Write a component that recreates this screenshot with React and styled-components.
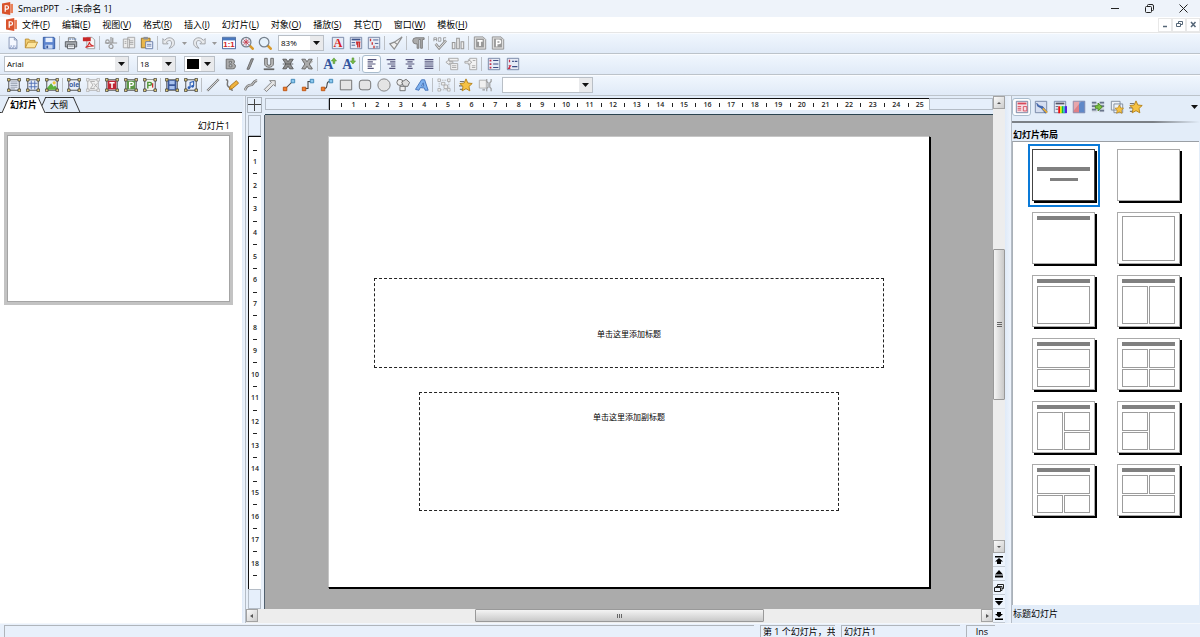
import React, { useState } from 'react'
import styled, { createGlobalStyle, css } from 'styled-components'

const GlobalStyle = createGlobalStyle`
    * {
        box-sizing: border-box;
    }
    html, body, #root {
        height: 100%;
    }
    body {
        margin: 0;
        overflow: hidden;
        font-family: "Open Sans", "Noto Sans CJK SC", sans-serif;
        font-size: 9px;
        line-height: 12px;
        color: #000;
    }
    button, select, input {
        font: inherit;
        color: inherit;
        padding: 0;
        margin: 0;
        border: none;
        background: none;
        border-radius: 0;
    }
    svg {
        display: block;
        flex: none;
    }
`

/* ---------- window frame ---------- */

const Window = styled.div`
    display: flex;
    flex-direction: column;
    height: 100vh;
    background: #e3edf9;
`
const TitleBar = styled.header`
    display: flex;
    align-items: center;
    height: 17px;
    flex: none;
    padding-left: 2px;
    background: #eef3fa;
`
const TitleText = styled.span`
    margin-left: 5px;
    flex: 1;
    white-space: pre;
`
const WindowButton = styled.button`
    width: 34px;
    height: 16px;
    display: flex;
    align-items: center;
    justify-content: center;
`
const MenuBar = styled.nav`
    display: flex;
    align-items: center;
    height: 16px;
    flex: none;
    padding-left: 6px;
    background: #fff;
    border-bottom: 1px solid #e6e6e6;
`
const MenuItems = styled.div`
    display: flex;
    flex: 1;
    gap: 12px;
    margin-left: 5px;
`
const MenuButton = styled.button`
    white-space: nowrap;
    line-height: 13px;
`
const DocButton = styled.button`
    width: 14px;
    height: 14px;
    display: flex;
    align-items: center;
    justify-content: center;
    border: 1px solid #e8e8e8;
`

/* ---------- toolbars ---------- */

const Toolbar = styled.div`
    display: flex;
    align-items: center;
    height: 21px;
    flex: none;
    padding-left: 4px;
    background: linear-gradient(#f1f7fe, #e0eaf7);
    border-bottom: 1px solid #bcc3ca;
    box-shadow: inset 0 1px 0 #fafcff;
`
const ToolButton = styled.button`
    width: ${(props) => props.$w || 19}px;
    height: 18px;
    flex: none;
    display: flex;
    align-items: center;
    justify-content: center;
    ${(props) => props.$active && css`
        background: #fdfeff;
        border: 1px solid #a9bccd;
        border-radius: 3px;
    `}
`
const Separator = styled.span`
    width: 1px;
    height: 14px;
    flex: none;
    margin: 0 ${(props) => (props.$tight ? 1 : 2)}px 0 1px;
    background: #bcc0c5;
`
const DropArrow = styled.button`
    width: 12px;
    height: 18px;
    display: flex;
    align-items: center;
    justify-content: center;
`
const Combo = styled.span`
    display: grid;
    width: ${(props) => props.$w}px;
    height: 16px;
    flex: none;
    margin: 0 ${(props) => props.$gap || 8}px 0 ${(props) => props.$before || 0}px;
    background: #fff;
    border: 1px solid #b9bfc6;
    select {
        grid-area: 1 / 1;
        appearance: none;
        width: 100%;
        padding-left: 2px;
        font-size: 8px;
        outline: none;
    }
`
const ComboArrow = styled.span`
    grid-area: 1 / 1;
    justify-self: end;
    width: 13px;
    display: flex;
    align-items: center;
    justify-content: center;
    background: #e9eaec;
    pointer-events: none;
`
const ColorButton = styled.button`
    display: flex;
    align-items: center;
    justify-content: space-between;
    width: 31px;
    height: 16px;
    padding: 0 3px 0 2px;
    margin-right: 6px;
    background: linear-gradient(90deg, #fff 16px, #e9eaec 16px);
    border: 1px solid #b9bfc6;
`
const Swatch = styled.span`
    width: 12px;
    height: 10px;
    background: #000;
`

/* ---------- slide list ---------- */

const Body = styled.main`
    display: flex;
    flex: 1;
    min-height: 0;
`
const LeftPanel = styled.aside`
    width: 242px;
    flex: none;
    display: flex;
    flex-direction: column;
    background: #fff;
`
const TabStrip = styled.div`
    display: flex;
    height: 17px;
    flex: none;
    padding: 1px 0 0 5px;
    background: #e3edf9;
    border-bottom: 1px solid #333;
`
const Tab = styled.button`
    position: relative;
    width: ${(props) => (props.$active ? 37 : 34)}px;
    height: 15px;
    z-index: ${(props) => (props.$active ? 2 : 1)};
    font-weight: ${(props) => (props.$active ? 700 : 400)};
    line-height: 15px;
    &::before, &::after {
        content: "";
        position: absolute;
        z-index: -1;
        top: 0;
        bottom: ${(props) => (props.$active ? -1 : 0)}px;
        border-top: 1px solid #333;
        background: ${(props) => (props.$active ? '#fff' : '#e3edf9')};
    }
    &::before {
        left: 0;
        right: 25%;
        border-left: 1px solid #333;
        transform: skewX(-24deg);
    }
    &::after {
        left: 25%;
        right: 0;
        border-right: 1px solid #333;
        transform: skewX(24deg);
    }
`
const SlideItem = styled.figure`
    margin: 6px 9px 0 4px;
`
const SlideLabel = styled.figcaption`
    padding-right: 3px;
    text-align: right;
    line-height: 13px;
`
const SlideThumb = styled.div`
    aspect-ratio: 229 / 173;
    border: 3px solid #c3c3c3;
    box-shadow: inset 0 0 0 1px #a4a4a4;
`

/* ---------- editor ---------- */

const Splitter = styled.div`
    width: ${(props) => props.$w}px;
    flex: none;
    background: linear-gradient(90deg, #dfeaf8, #eef4fc);
    border-right: 1px solid #b4bcc6;
`
const Editor = styled.section`
    flex: 1;
    min-width: 0;
    display: grid;
    grid-template: 19px 1fr 14px / 19px 1fr;
`
const Corner = styled.div`
    width: 15px;
    height: 16px;
    margin: 1px 0 0 1px;
    border: 1px solid #a9b1ba;
    background: #e6effa;
`
const RulerH = styled.div`
    display: flex;
    margin-top: 2px;
    height: 12px;
    padding: 0;
`
const RulerRow = styled.div`
    border-bottom: 1px solid #2b4450;
    background: #e3edf9;
`
const RulerCol = styled.div`
    display: flex;
    flex-direction: column;
    align-items: flex-start;
    padding-left: 2px;
    border-right: 1px solid #51606e;
    background: #e8f0fa;
`
const RulerBlank = styled.div`
    flex: 1;
    min-height: 0;
    align-self: stretch;
    margin-right: ${(props) => (props.$vertical ? 3 : 0)}px;
    border: 1px solid #b4bcc6;
    background: #e6effb;
`
const Scale = styled.div`
    display: flex;
    flex: none;
    background: #fff;
    font-size: 7px;
    line-height: 10px;
    font-weight: 600;
    color: #222;
    border-top: 1px solid #111;
    border-left: 1px solid #111;
    ${(props) => props.$vertical
        ? css`
            flex-direction: column;
            width: 13px;
            height: 453px;
            padding-top: 2px;`
        : css`
            width: 600px;`}
`
const Pad = styled.span`
    flex: ${(props) => props.$n} 1 0;
`
const Mark = styled.span`
    flex: 10 1 0;
    min-width: 0;
    min-height: 0;
    display: flex;
    align-items: center;
    justify-content: center;
`
const Tick = styled.i`
    flex: none;
    width: ${(props) => (props.$vertical ? 4 : 1)}px;
    height: ${(props) => (props.$vertical ? 1 : 4)}px;
    background: #222;
`
const Canvas = styled.div`
    display: flex;
    align-items: center;
    justify-content: center;
    overflow: hidden;
    background: #ababab;
`
const Slide = styled.article`
    width: 602px;
    height: 452px;
    flex: none;
    display: flex;
    flex-direction: column;
    align-items: center;
    gap: 24px;
    padding-top: 141px;
    background: #fff;
    border: 1px solid #c6c6c6;
    border-right-color: #000;
    border-bottom-color: #000;
    box-shadow: 1px 1px 0 #000;
    font-size: 8px;
`
const Placeholder = styled.div`
    width: ${(props) => props.$w}px;
    height: ${(props) => props.$h}px;
    padding-top: ${(props) => props.$top}px;
    border: 1px dashed #222;
    text-align: center;
`
const ScrollV = styled.div`
    width: 12px;
    flex: none;
    display: flex;
    flex-direction: column;
    background: #ededed;
`
const ScrollH = styled.div`
    grid-column: 1 / -1;
    display: flex;
    padding: 0 0 1px 0;
    background: #ededed;
`
const Track = styled.div`
    flex: 1;
    display: flex;
    flex-direction: ${(props) => (props.$vertical ? 'column' : 'row')};
    justify-content: center;
`
const Thumb = styled.div`
    flex: 0 0 ${(props) => (props.$vertical ? 35 : 40)}%;
    display: flex;
    align-items: center;
    justify-content: center;
    border: 1px solid #999;
    border-radius: 1px;
    background: linear-gradient(${(props) => (props.$vertical ? '90deg' : '180deg')}, #f4f4f4, #c9c9c9);
`
const ScrollButton = styled.button`
    width: 12px;
    height: 13px;
    flex: none;
    display: flex;
    align-items: center;
    justify-content: center;
    border: 1px solid #a3a3a3;
    background: linear-gradient(135deg, #fafafa, #ccc);
`
const NavButton = styled.button`
    width: 12px;
    height: 14px;
    flex: none;
    display: flex;
    align-items: center;
    justify-content: center;
    border-bottom: 1px solid #c2cad3;
    background: #edf4fd;
`

/* ---------- task pane ---------- */

const RightPanel = styled.aside`
    width: 188px;
    flex: none;
    display: flex;
    flex-direction: column;
    background: #e3edf9;
`
const PaneTools = styled.div`
    display: flex;
    align-items: center;
    height: 21px;
    flex: none;
`
const PaneMenu = styled.button`
    margin-left: auto;
    padding: 4px 2px;
`
const PaneRule = styled.hr`
    height: 2px;
    flex: none;
    width: 100%;
    margin: 4px 0 6px;
    border: none;
    background: linear-gradient(90deg, #7b8086 75%, #e3edf9);
`
const PaneTitle = styled.h2`
    margin: 0;
    padding-left: 1px;
    font-size: 9px;
    line-height: 12px;
    font-weight: 700;
`
const LayoutList = styled.div`
    flex: 1;
    min-height: 0;
    margin-right: 1px;
    display: grid;
    grid-template-columns: 85px 85px;
    grid-auto-rows: 63px;
    align-content: start;
    padding: 2px 0 0 15px;
    background: #fff;
    border-left: 1px solid #aab1b8;
    border-top: 1px solid #9a9fa5;
`
const LayoutCell = styled.button`
    width: 72px;
    height: 63px;
    padding: 3px 0 0 2px;
    border: 2px solid ${(props) => (props.$active ? '#0a7ad8' : 'transparent')};
    display: flex;
    align-items: flex-start;
`
const MiniSlide = styled.span`
    width: 63px;
    height: 52px;
    display: flex;
    flex-direction: column;
    align-items: center;
    gap: 3px;
    padding: ${(props) => (props.$cover ? 17 : 3)}px 4px 2px;
    background: #fff;
    border: 1px solid ${(props) => (props.$cover ? '#444' : '#aaa')};
    box-shadow: 2px 2px 0 #000;
`
const MiniBar = styled.span`
    width: ${(props) => (props.$short ? 28 : 53)}px;
    height: ${(props) => (props.$short ? 3 : 4)}px;
    margin-top: ${(props) => (props.$short ? 4 : 0)}px;
    background: #808080;
`
const MiniGrid = styled.span`
    align-self: stretch;
    flex: 1;
    display: grid;
    grid-template: 1fr 1fr / 1fr 1fr;
    gap: 1px;
`
const MiniBox = styled.span`
    grid-area: ${(props) => props.$area};
    border: 1px solid #9c9c9c;
`
const PaneFooter = styled.footer`
    height: 18px;
    flex: none;
    padding-left: 1px;
    line-height: 18px;
`

/* ---------- status bar ---------- */

const StatusBar = styled.footer`
    display: flex;
    gap: 6px;
    height: 14px;
    flex: none;
    padding: 1px 205px 0 4px;
    border-top: 1px solid #f3f7fc;
    background: #e8f0fb;
`
const StatusField = styled.span`
    flex: ${(props) => (props.$w ? `0 0 ${props.$w}px` : 1)};
    padding-left: 2px;
    overflow: hidden;
    white-space: nowrap;
    line-height: 11px;
    text-align: ${(props) => (props.$center ? 'center' : 'left')};
    border-top: 1px solid #b0b5bb;
    border-left: 1px solid #b0b5bb;
`

/* ---------- icons ---------- */

const Svg = ({ children, size = 14 }) => (
    <svg width={size} height={size} viewBox="0 0 16 16" fill="none" aria-hidden="true">{children}</svg>
)

const Arrow = () => (
    <svg width="7" height="4" viewBox="0 0 7 4" aria-hidden="true"><path d="M0 0h7L3.5 4z" fill="#111" /></svg>
)

const Glyph = ({ children, fill = '#fff', size = 10, y = 12, x = 8, ...rest }) => (
    <text x={x} y={y} fontSize={size} fontWeight="700" textAnchor="middle" fill={fill} fontFamily="Liberation Serif, serif" {...rest}>{children}</text>
)

/* object frame with four handles */
const Frame = ({ children, off }) => (
    <>
        <path d="M2 2h12v12H2z" fill={off ? '#f1f1f1' : '#e8eef8'} stroke={off ? '#aaa' : '#444'} />
        {children}
        <path d="M.5.5h3v3h-3zM12.500.5h3v3h-3zM.5 12.500h3v3h-3zM12.500 12.500h3v3h-3z" fill={off ? '#eee' : '#e6cf78'} stroke={off ? '#aaa' : '#333'} strokeWidth=".8" />
    </>
)
const Star = ({ t }) => (
    <path transform={t} d="M8 1l2.100 4.700 5 .6-3.700 3.400 1 5L8 12.200l-4.400 2.500 1-5L.9 6.300l5-.6z" fill="#f6c243" stroke="#b07d14" />
)
const Box = ({ fill = '#e6ebf6', stroke = '#7080a0' }) => <path d="M1.500 1.500h13v13h-13z" fill={fill} stroke={stroke} />
const Lens = ({ children }) => (
    <>
        <path d="M10.500 10.500l4 4" stroke="#d99a2b" strokeWidth="3" strokeLinecap="round" />
        <circle cx="7" cy="7" r="5.500" fill="#e5f1fb" stroke="#76808c" strokeWidth="1.400" />
        {children}
    </>
)
const Connector = ({ d }) => (
    <>
        <path d={d} stroke="#444" strokeWidth="1.200" />
        <path d="M1.500 10.500h4v4h-4z" fill="#f08030" stroke="#b9500d" />
        <path d="M10.500 1.500h4v4h-4z" fill="#8cc8ee" stroke="#3a83b5" />
    </>
)
const Lines = ({ d, c = '#55557c' }) => <path d={d} stroke={c} strokeWidth="1.400" />

const icons = {
    new: <><path d="M3.500 1.500h6l3 3v10h-9z" fill="#f4f8ff" stroke="#7f8fb0" /><path d="M9.500 1.500v3h3" stroke="#7f8fb0" /><path d="M4 13.500h9M5 11.500h7" stroke="#6d83b8" strokeDasharray="2 1" /></>,
    open: <><path d="M1.500 13.500v-10h4l1 1.500h6v3" fill="#f2cf74" stroke="#b98a2d" /><path d="M1.500 13.500l3-6.500h11l-3 6.500z" fill="#fde59c" stroke="#b98a2d" /></>,
    save: <><path d="M1.500 1.500h12l1 1v12h-13z" fill="#5d85cf" stroke="#2e549c" /><path d="M4 2h8v5H4z" fill="#e9f0fc" /><path d="M4 10h8v4.500H4z" fill="#c9d8f2" /><path d="M5 11h2v3H5z" fill="#39589a" /></>,
    print: <><path d="M5 6V2h7l1 4" fill="#f8fafc" stroke="#777" /><path d="M6 3.500h9" stroke="#3d67a8" strokeDasharray="2 1" /><path d="M1.500 6.500h13v6h-13z" fill="#a9adb2" stroke="#53575c" /><path d="M4 9.500h8v5H4z" fill="#eef2f8" stroke="#53575c" /><path d="M5 11.500h6" stroke="#777" /></>,
    pdf: <><path d="M5.500 1.500h6l3 3v10h-9z" fill="#f7f7f7" stroke="#999" /><path d="M1 1.500h9v4.500H1z" fill="#c92828" /><path d="M4 13c2-1 4-3 4.500-6 .5 3 2 4 5 4.500-3 0-6 .5-9.500 1.500z" stroke="#d23232" strokeWidth="1.200" /></>,
    cut: <><path d="M1 8h14M8 1v8M10 2v6" stroke="#999" strokeWidth="1.400" /><circle cx="4" cy="6.500" r="2" stroke="#999" strokeWidth="1.300" /><circle cx="8" cy="12" r="2.300" stroke="#999" strokeWidth="1.300" /></>,
    copy: <><path d="M1.500 3.500h7v10h-7zM6.500 1.500h8v12h-8z" fill="#ececec" stroke="#a3a3a3" /><path d="M3 6.500h2m-2 2h2m3-3h5m-5 2h5m-5 2h5" stroke="#a3a3a3" /></>,
    paste: <><path d="M1.500 2.500h10v11h-10z" fill="#e9b64b" stroke="#8a6b2b" /><path d="M4 1h5v3H4z" fill="#8d9199" /><path d="M6.500 6.500h8v8h-8z" fill="#f1f5fd" stroke="#6177a5" /><path d="M8 9.500h5m-5 2h5" stroke="#6177a5" /></>,
    undo: <path d="M1 3v6h6L5 7c3-3 6-2 6 1 0 2-1 4-3 6 5-1 7-4 6-8C13 2 7 0 3 5z" fill="#e9ebee" stroke="#999ca0" />,
    redo: <path d="M15 3v6H9l2-2C8 4 5 5 5 8c0 2 1 4 3 6-5-1-7-4-6-8C3 2 9 0 13 5z" fill="#e9ebee" stroke="#999ca0" />,
    actual: <><path d="M.5 1.500h15v13H.5z" fill="#fff" stroke="#34568f" /><path d="M1 2h14v3H1z" fill="#4a78bf" /><Glyph size={9} y={13} fill="#d01f1f" fontFamily="Liberation Sans, sans-serif">1:1</Glyph></>,
    zoomPage: <Lens><path d="M7 3v8M3 7h8M4 4l6 6M10 4l-6 6" stroke="#c63d4c" /></Lens>,
    zoom: <Lens />,
    fontA: <><Box /><Glyph size={14} y={13} fill="#d81e1e">A</Glyph></>,
    para: <><Box /><path d="M3 4h10" stroke="#3e558c" strokeWidth="2" /><path d="M3 7.500h4m-4 3h4" stroke="#3e558c" /><path d="M8 7h5M10 7v6m2-6v6M9 7v3" stroke="#cc2e2e" strokeWidth="1.500" /></>,
    list: <><Box /><path d="M4 3v3m2 1v3m2 1v3" stroke="#cc2e2e" strokeWidth="1.500" /><path d="M7 4.500h6M9 8.500h4m-3 4h3" stroke="#3e558c" /></>,
    brush: <path d="M15 1l-5 8-4 6-5-6 5-2zM6 7l4 3" fill="#f0f0f0" stroke="#8e8e8e" strokeWidth="1.300" />,
    pilcrow: <path d="M15 2H5.500a3.500 3.500 0 000 7H7v5h2V4h2v10h2V4h2z" fill="#ababab" stroke="#777" />,
    spell: <><path d="M1 6V2h3v4M1 4h3M6 6V2h3v4H6m6-4h3M12 2v4h3" stroke="#999" /><path d="M3 9l4 5 8-9" stroke="#8e8e8e" strokeWidth="3" /><path d="M3 9l4 5 8-9" stroke="#eee" /></>,
    chart: <path d="M1.500 7.500h3v7h-3zM6.500 2.500h3v12h-3zM11.500 6.500h3v8h-3z" fill="#ececec" stroke="#999" strokeWidth="1.200" />,
    pageT: <><path d="M1.500 1h10l3 3v11h-13z" fill="#ddd" stroke="#8e8e8e" /><path d="M3.500 3h9v10h-9z" fill="#999" /><path d="M5 5.500h6M8 5v6.500" stroke="#fff" strokeWidth="2" /></>,
    pageP: <><path d="M1.500 1h10l3 3v11h-13z" fill="#ddd" stroke="#8e8e8e" /><path d="M3.500 3h9v10h-9z" fill="#999" /><path d="M6.500 12V5h2.500a1.800 1.800 0 010 3.600H7" stroke="#fff" strokeWidth="1.800" /></>,

    bold: <path fillRule="evenodd" d="M2.500 2.500H9a3 3 0 012 5.200A3 3 0 019.500 13.500h-7zM6 5v2h2.500V5zM6 9v2.200h3V9z" fill="#aaa" stroke="#666" />,
    italic: <path d="M9.500 2h2.500l-5 12H4.500z" fill="#999" stroke="#666" />,
    under: <><path d="M3 1.500h3V8c0 2 4 2 4 0V1.500h3V8c0 5-10 5-10 0z" fill="#bbb" stroke="#666" /><path d="M2 14h12" stroke="#666" strokeWidth="2" /></>,
    strike: <><path d="M2 2.500h4l2 3 2-3h4L10.500 8l3.500 5.500h-4l-2-3-2 3H2L5.500 8z" fill="#8f8f8f" stroke="#555" /><path d="M2 8h12" stroke="#555" /></>,
    shadow: <><path d="M4 4l10 10M14 4L4 14" stroke="#c3c3c3" strokeWidth="3" /><path d="M2 2.500h4l2 3 2-3h4L10.500 8l3.500 5.500h-4l-2-3-2 3H2L5.500 8z" fill="#aaa" stroke="#666" /></>,
    grow: <><Glyph size={16} x={6} y={14} fill="#33569f">A</Glyph><path d="M12.500 1l3 3.500h-2v3h-2v-3h-2z" fill="#76bb45" stroke="#4d8a26" strokeWidth=".6" /></>,
    shrink: <><Glyph size={16} x={6} y={14} fill="#33569f">A</Glyph><path d="M12.500 8l3-3.500h-2V1h-2v3.500h-2z" fill="#76bb45" stroke="#4d8a26" strokeWidth=".6" /></>,
    left: <Lines d="M3 3h10M3 5.500h6M3 8h9M3 10.500h5M3 13h7" />,
    right: <Lines d="M3 3h10M7 5.500h6M4 8h9M8 10.500h5M6 13h7" />,
    center: <Lines d="M3 3h10M5 5.500h6M3 8h10M6 10.500h4M5 13h6" />,
    justify: <Lines d="M3 3h10M3 5.500h10M3 8h10M3 10.500h10M3 13h10" />,
    outdent: <><path d="M4 1.500h11v3H4zM6.500 7.500h8v7h-8z" fill="#f2f2f2" stroke="#a3a3a3" /><path d="M1 6l4-3v2h4v2H5v2zM8 10h5m-5 2h5" fill="#eee" stroke="#a3a3a3" /></>,
    indent: <><path d="M6.500 1.500h8v13h-8z" fill="#f2f2f2" stroke="#a3a3a3" /><path d="M9 6L5 3v2H1v2h4v2zM9 10h4m-4 2h4m-3-8h3" fill="#eee" stroke="#a3a3a3" /></>,
    bullets: <><Box /><path d="M3 4h2M3 8h2m-2 4h2" stroke="#c62f4a" strokeWidth="2" /><path d="M7 4h6M7 8h6m-6 4h6" stroke="#3e4d84" strokeWidth="1.400" /></>,
    numbers: <><Box /><path d="M4 3v3M3 10h2l-2 3h2" stroke="#c62f4a" strokeWidth="1.400" /><path d="M7 5h2m1 0h3M7 11h6" stroke="#3e4d84" strokeWidth="1.400" /></>,

    oText: <Frame><path d="M4 4.500h8M4 6.500h8m-8 2h8m-8 2h8m-8 2h5" stroke="#8d96a6" /></Frame>,
    oTable: <Frame><path d="M3 6h10M3 10h10M6 3v10M10 3v10" stroke="#4c6cb4" /></Frame>,
    oImage: <Frame><path d="M2.500 13.500V11L7 6l3 4 1.500-1.500 2 2.500v2.500z" fill="#5db23c" /><circle cx="10.500" cy="5.500" r="1.800" fill="#f2c53b" /></Frame>,
    oOle: <Frame><Glyph size={8} y={10.500} fill="#35569c" fontFamily="Liberation Sans, sans-serif">ole</Glyph></Frame>,
    oFormula: <Frame off><path d="M10 4H5l3 4-3 4h5M9 6l4 5m0-5l-4 5" stroke="#aaa" /></Frame>,
    oTitle: <Frame><path d="M3 3h10v10H3z" fill="#c02734" /><path d="M5 5.500h6M8 5v6.500" stroke="#fff" strokeWidth="1.800" /></Frame>,
    oP: <Frame><path d="M3 3h10v10H3z" fill="#5d9748" /><path d="M6.500 12V5H9a1.700 1.700 0 010 3.400H7" stroke="#fff" strokeWidth="1.600" /></Frame>,
    oPage: <Frame><path d="M4 2h8v12H4z" fill="#f0f5ec" /><path d="M5.500 12V5H8a1.700 1.700 0 010 3.400H6" stroke="#4f963a" strokeWidth="1.600" /><path d="M11 6v5" stroke="#c33" strokeWidth="1.500" /></Frame>,
    oMovie: <Frame><path d="M3 2.500h10v11H3z" fill="#3c5a9c" /><path d="M5 3.500h6V7H5zM5 9h6v3.500H5z" fill="#a9c2ef" /></Frame>,
    oMusic: <Frame><path d="M7 11V5l4-1v5" stroke="#2f60b4" strokeWidth="1.300" /><circle cx="5.700" cy="11" r="1.600" fill="#2f60b4" /><circle cx="9.800" cy="9.500" r="1.600" fill="#2f60b4" /></Frame>,
    line: <><path d="M1.500 14.500l13-13" stroke="#777" strokeWidth="2.600" /><path d="M1.500 14.500l13-13" stroke="#e3e3e3" /></>,
    pen: <><path d="M1 2c5 0-1 6 3 8s1 4 5 4" stroke="#777" strokeWidth="1.600" /><path d="M5 13l1-4 7-6 2.500 3-7 6z" fill="#f0b33c" stroke="#a66c14" /></>,
    curve: <><path d="M1 14c2-5 4-6 7-6s2-5 7-5" stroke="#777" strokeWidth="3" /><path d="M1 14c2-5 4-6 7-6s2-5 7-5" stroke="#e6e6e6" /></>,
    arrow: <path d="M1.500 13l8-8-2-2H14v6.500l-2-2-8 8z" fill="#e6e6e6" stroke="#777" />,
    c1: <Connector d="M4 12l8-8" />,
    c2: <Connector d="M4 12h4V4h4" />,
    c3: <Connector d="M4 12c7 1 1-9 8-8" />,
    rect: <path d="M1.500 2.500h13v11h-13z" fill="#e4e4e4" stroke="#666" />,
    round: <rect x="1.500" y="2.500" width="13" height="11" rx="3" fill="#e4e4e4" stroke="#666" />,
    ellipse: <circle cx="8" cy="8" r="7" fill="#e4e4e4" stroke="#777" />,
    shapes: <><circle cx="4.500" cy="5" r="3.500" fill="#eee" stroke="#666" /><path d="M6.500 4.500l5-3 4 3.500-2 4.500h-5z" fill="#ddd" stroke="#666" /><path d="M4.500 9.500h6v5h-6z" fill="#eee" stroke="#666" /></>,
    art: <path fillRule="evenodd" d="M.5 13L7.500 2H11l4 12h-3.500l-.7-2.500L6 11l-1.500 3zM7.500 9l2.500.3L9.400 5.500z" fill="#7fb2ef" stroke="#3465b0" strokeWidth=".9" />,
    group: <><path d="M2.500 2.500h11v11h-11z" stroke="#b3b3b3" strokeDasharray="2 1" /><path d="M1 1h3v3H1zM12 1h3v3h-3zM1 12h3v3H1zM12 12h3v3h-3z" fill="#eee" stroke="#999" strokeWidth=".7" /><path d="M5 5h4v3H5zM8 8h4v4H8z" fill="#eee" stroke="#aaa" /></>,
    star: <><path d="M1 4h5M0 9h5M1 13h5" stroke="#777" strokeWidth="1.400" /><Star /></>,
    action: <><path d="M1.500 2.500h8v9h-8z" fill="#f0f0f0" stroke="#aaa" /><path d="M10 1v3l1.500 1.500v5L10 12v3M15 1v3l-1.500 1.500v5L15 12v3M5 13.500h3" stroke="#999" strokeWidth="1.300" /></>,

    pLayout: <><Box fill="#f6dfe3" /><path d="M3 4h10" stroke="#d7485b" strokeWidth="2" /><path d="M3 7.500h4m-4 2h4m-4 2h4M9.500 7.500h4v5h-4z" stroke="#d7485b" /></>,
    pDesign: <><Box fill="#d5def0" /><path d="M3 3.500l3 3 4 1 5 6-2 1.500-5-6-4-2z" fill="#3f6ab8" stroke="#2d4f90" strokeWidth=".6" /><path d="M10 9.500l5 5" stroke="#e5ac3c" strokeWidth="2.200" /></>,
    pColor: <><Box /><path d="M3 4h10" stroke="#556" strokeWidth="2" /><path d="M3 7.500h3m-3 3h3" stroke="#556" /><path d="M6 7h2v8H6z" fill="#e11" /><path d="M8 7h2v8H8z" fill="#ee0" /><path d="M10 7h2v8h-2z" fill="#1b3" /><path d="M12 7h1.500v8H12z" fill="#1bd" /><path d="M13.500 7H16v8h-2.500z" fill="#52d" /></>,
    pBack: <><path d="M1 1h7v14H1z" fill="#df8087" /><path d="M8 1h7v14H8z" fill="#5f88c8" /><path d="M1 1h10L1 13z" fill="#fff" opacity=".3" /><path d="M1.500 1.500h13v13h-13z" stroke="#8b93b5" /></>,
    pSwitch: <><path d="M1 2h6v12H1zM9 2h6v12H9z" fill="#d3d9e4" /><path d="M1 3h5M1 7h4m-4 4h5m4-8h5m-4 4h4m-5 5h5" stroke="#68758c" strokeWidth="2" /><path d="M5 6.500h3V3.500L13 8l-5 4.500v-3H5z" fill="#7cc13f" stroke="#4a8521" /></>,
    pCopy: <><path d="M1.500 1.500h10v10h-10zM4.500 4.500h10v10h-10z" fill="#eef2f8" stroke="#7b8798" /><Star t="translate(5 5) scale(.7)" /></>,
}

const Tool = ({ name, w, active }) => (
    <ToolButton type="button" aria-label={name} $w={w} $active={active}><Svg>{icons[name]}</Svg></ToolButton>
)

/* '|' draws a separator, 'v' a small drop arrow */
const Tools = ({ items, w, tight, active }) => items.split(' ').map((name, i) => {
    if (name === '|') return <Separator key={i} $tight={tight} />
    if (name === 'v') return <DropArrow key={i} type="button" aria-label="more"><svg width="5" height="3" viewBox="0 0 5 3"><path d="M0 0h5L2.500 3z" fill="#999" /></svg></DropArrow>
    return <Tool key={i} name={name} w={w} active={name === active} />
})

const Select = ({ label, options, w, gap, before }) => (
    <Combo $w={w} $gap={gap} $before={before}>
        <select aria-label={label}>
            {options.map((o) => <option key={o}>{o}</option>)}
        </select>
        <ComboArrow><Arrow /></ComboArrow>
    </Combo>
)

const Logo = ({ size }) => (
    <svg width={size} height="13" viewBox="0 0 12 14" aria-hidden="true">
        <path d="M0 1.500L9 0v14l-9-1.500z" fill="#d9532c" />
        <path d="M9 2h3v10H9z" fill="#e9825c" />
        <path d="M3.500 10.500V4h1.800a1.800 1.800 0 010 3.600H4" stroke="#fff" strokeWidth="1.300" fill="none" />
    </svg>
)

const menus = [['文件', 'F'], ['编辑', 'E'], ['视图', 'V'], ['格式', 'R'], ['插入', 'I'], ['幻灯片', 'L'], ['对象', 'O'], ['播放', 'S'], ['其它', 'T'], ['窗口', 'W'], ['模板', 'H']]

const FULL = '1 / 1 / 3 / 3'
const [TL, TR, BL, BR] = ['1 / 1', '1 / 2', '2 / 1', '2 / 2']
const TOP = '1 / 1 / 2 / 3'
const BOTTOM = '2 / 1 / 3 / 3'
const LEFT = '1 / 1 / 3 / 2'
const RIGHT = '1 / 2 / 3 / 3'

const layouts = [
    { name: '标题幻灯片', cover: true },
    { name: '空白' },
    { name: '仅标题', title: true },
    { name: '内容', boxes: [FULL] },
    { name: '标题和内容', title: true, boxes: [FULL] },
    { name: '两栏', title: true, boxes: [LEFT, RIGHT] },
    { name: '上下', title: true, boxes: [TOP, BOTTOM] },
    { name: '四项', title: true, boxes: [TL, TR, BL, BR] },
    { name: '左一右二', title: true, boxes: [LEFT, TR, BR] },
    { name: '左二右一', title: true, boxes: [TL, BL, RIGHT] },
    { name: '上一下二', title: true, boxes: [TOP, BL, BR] },
    { name: '上二下一', title: true, boxes: [TL, TR, BOTTOM] },
]

const Ruler = ({ count, end, vertical }) => (
    <Scale $vertical={vertical}>
        <Pad $n={5} />
        {Array.from({ length: count }, (_, i) => (
            <Mark key={i}>{i % 2 ? (i + 1) / 2 : <Tick $vertical={vertical} />}</Mark>
        ))}
        <Pad $n={end} />
    </Scale>
)

const Triangle = ({ d }) => (
    <svg width="6" height="6" viewBox="0 0 6 6" aria-hidden="true"><path d={d} fill="#555" /></svg>
)
const navs = [
    ['first', 'M1 1h8v1.500H1zM5 3l4 3.500H1zM3 6h4v3H3z'],
    ['previous', 'M5 1l4 4.500H1zM1 6.500h8v2H1z'],
    ['browse', null],
    ['next', 'M1 1h8v2H1zM1 4h8L5 8.500z'],
    ['last', 'M3 1h4v2H3zM1 3h8L5 6.500zM1 7.500h8V9H1z'],
]

const App = () => {
    const [layout, setLayout] = useState(0)
    return (
        <Window>
            <GlobalStyle />
            <TitleBar>
                <Logo size={11} />
                <TitleText>{'SmartPPT   - [未命名 1]'}</TitleText>
                <WindowButton aria-label="Minimize"><svg width="9" height="9" viewBox="0 0 9 9"><path d="M0 4.500h8" stroke="#222" /></svg></WindowButton>
                <WindowButton aria-label="Restore"><svg width="9" height="9" viewBox="0 0 9 9" fill="none" stroke="#222"><path d="M2.500 2V1.500q0-1 1-1H7q1.500 0 1.500 1.500v3.500q0 1-1 1H7" /><rect x=".5" y="2.500" width="6" height="6" rx="1" /></svg></WindowButton>
                <WindowButton aria-label="Close"><svg width="9" height="9" viewBox="0 0 9 9"><path d="M.5.5l8 8M8.500.5l-8 8" stroke="#222" /></svg></WindowButton>
            </TitleBar>
            <MenuBar>
                <Logo size={11} />
                <MenuItems>
                    {menus.map(([text, key]) => (
                        <MenuButton key={key} type="button">{text}(<u>{key}</u>)</MenuButton>
                    ))}
                </MenuItems>
                <DocButton aria-label="Minimize document"><svg width="7" height="7" viewBox="0 0 7 7"><path d="M1 5.500h4" stroke="#556677" strokeWidth="1.500" /></svg></DocButton>
                <DocButton aria-label="Restore document"><svg width="7" height="7" viewBox="0 0 7 7" fill="none" stroke="#556677"><path d="M2.500 2V.5h4v3H5M.5 2.500h4v3h-4z" /></svg></DocButton>
                <DocButton aria-label="Close document"><svg width="7" height="7" viewBox="0 0 7 7"><path d="M1 1l4.500 5M5.500 1L1 6" stroke="#556677" strokeWidth="1.500" /></svg></DocButton>
            </MenuBar>
            <Toolbar>
                <Tools w={18} items="new open save | print pdf | cut copy paste | undo v redo v actual zoomPage zoom" />
                <Select label="Zoom" options={['83%', '100%']} w={46} gap={5} before={4} />
                <Tools w={18} items="fontA para list | brush | pilcrow | spell chart | pageT pageP" />
            </Toolbar>
            <Toolbar>
                <Select label="Font" options={['Arial']} w={125} />
                <Select label="Size" options={['18', '24']} w={39} />
                <ColorButton type="button" aria-label="Font colour"><Swatch /><Arrow /></ColorButton>
                <Tools active="left" items="bold italic under strike shadow | grow shrink | left right center justify | outdent indent | bullets numbers" />
            </Toolbar>
            <Toolbar>
                <Tools tight items="oText oTable oImage | oOle oFormula oTitle oP oPage | oMovie oMusic | line pen curve arrow c1 c2 c3 rect round ellipse shapes art | group | star action" />
                <Select label="Action" options={['']} w={91} before={8} />
            </Toolbar>
            <Body>
                <LeftPanel>
                    <TabStrip>
                        <Tab type="button" $active>幻灯片</Tab>
                        <Tab type="button">大纲</Tab>
                    </TabStrip>
                    <SlideItem>
                        <SlideLabel>幻灯片1</SlideLabel>
                        <SlideThumb />
                    </SlideItem>
                </LeftPanel>
                <Splitter $w={4} />
                <Editor>
                    <Corner><svg width="13" height="14" viewBox="0 0 13 14"><path d="M0 6.500h13M6.500 1v12" stroke="#444" /></svg></Corner>
                    <RulerRow>
                        <RulerH>
                            <RulerBlank />
                            <Ruler count={50} end={3} />
                            <RulerBlank />
                        </RulerH>
                    </RulerRow>
                    <RulerCol>
                        <RulerBlank $vertical />
                        <Ruler count={37} end={6} vertical />
                        <RulerBlank $vertical />
                    </RulerCol>
                    <Canvas>
                        <Slide>
                            <Placeholder $w={510} $h={90} $top={49}>单击这里添加标题</Placeholder>
                            <Placeholder $w={420} $h={119} $top={18}>单击这里添加副标题</Placeholder>
                        </Slide>
                    </Canvas>
                    <ScrollH>
                        <ScrollButton aria-label="Scroll left"><Triangle d="M4 1v4L1 3z" /></ScrollButton>
                        <Track>
                            <Thumb><svg width="6" height="4" viewBox="0 0 6 4"><path d="M.5 0v4M2.500 0v4M4.500 0v4" stroke="#666" /></svg></Thumb>
                        </Track>
                        <ScrollButton aria-label="Scroll right"><Triangle d="M2 1v4l3-2z" /></ScrollButton>
                    </ScrollH>
                </Editor>
                <ScrollV>
                    <ScrollButton aria-label="Scroll up"><Triangle d="M1 4h4L3 2z" /></ScrollButton>
                    <Track $vertical>
                        <Thumb $vertical><svg width="5" height="6" viewBox="0 0 5 6"><path d="M0 .5h5M0 2.500h5M0 4.500h5" stroke="#666" /></svg></Thumb>
                    </Track>
                    <ScrollButton aria-label="Scroll down"><Triangle d="M1 2h4L3 4z" /></ScrollButton>
                    {navs.map(([name, d]) => (
                        <NavButton key={name} aria-label={name}>
                            <svg width="10" height="10" viewBox="0 0 10 10" fill="none">
                                {d ? <path d={d} fill="#000" /> : <path d="M3.500 3V1.500h6v4H8M.5 4.500h6v4h-6zM2 4.500v-1h6v4H7" stroke="#222" />}
                            </svg>
                        </NavButton>
                    ))}
                </ScrollV>
                <Splitter $w={7} />
                <RightPanel>
                    <PaneTools>
                        <Tools items="pLayout pDesign pColor pBack pSwitch pCopy star" active="pLayout" />
                        <PaneMenu aria-label="Pane menu"><Arrow /></PaneMenu>
                    </PaneTools>
                    <PaneRule />
                    <PaneTitle>幻灯片布局</PaneTitle>
                    <LayoutList>
                        {layouts.map((l, i) => (
                            <LayoutCell key={l.name} type="button" aria-label={l.name} $active={layout === i} onClick={() => setLayout(i)}>
                                <MiniSlide $cover={l.cover}>
                                    {(l.title || l.cover) && <MiniBar />}
                                    {l.cover && <MiniBar $short />}
                                    {l.boxes && <MiniGrid>{l.boxes.map((a) => <MiniBox key={a} $area={a} />)}</MiniGrid>}
                                </MiniSlide>
                            </LayoutCell>
                        ))}
                    </LayoutList>
                    <PaneFooter>{layouts[layout].name}</PaneFooter>
                </RightPanel>
            </Body>
            <StatusBar>
                <StatusField />
                <StatusField $w={75}>第 1 个幻灯片，共</StatusField>
                <StatusField $w={119}>幻灯片1</StatusField>
                <StatusField $w={29} $center>Ins</StatusField>
            </StatusBar>
        </Window>
    )
}

export default App
